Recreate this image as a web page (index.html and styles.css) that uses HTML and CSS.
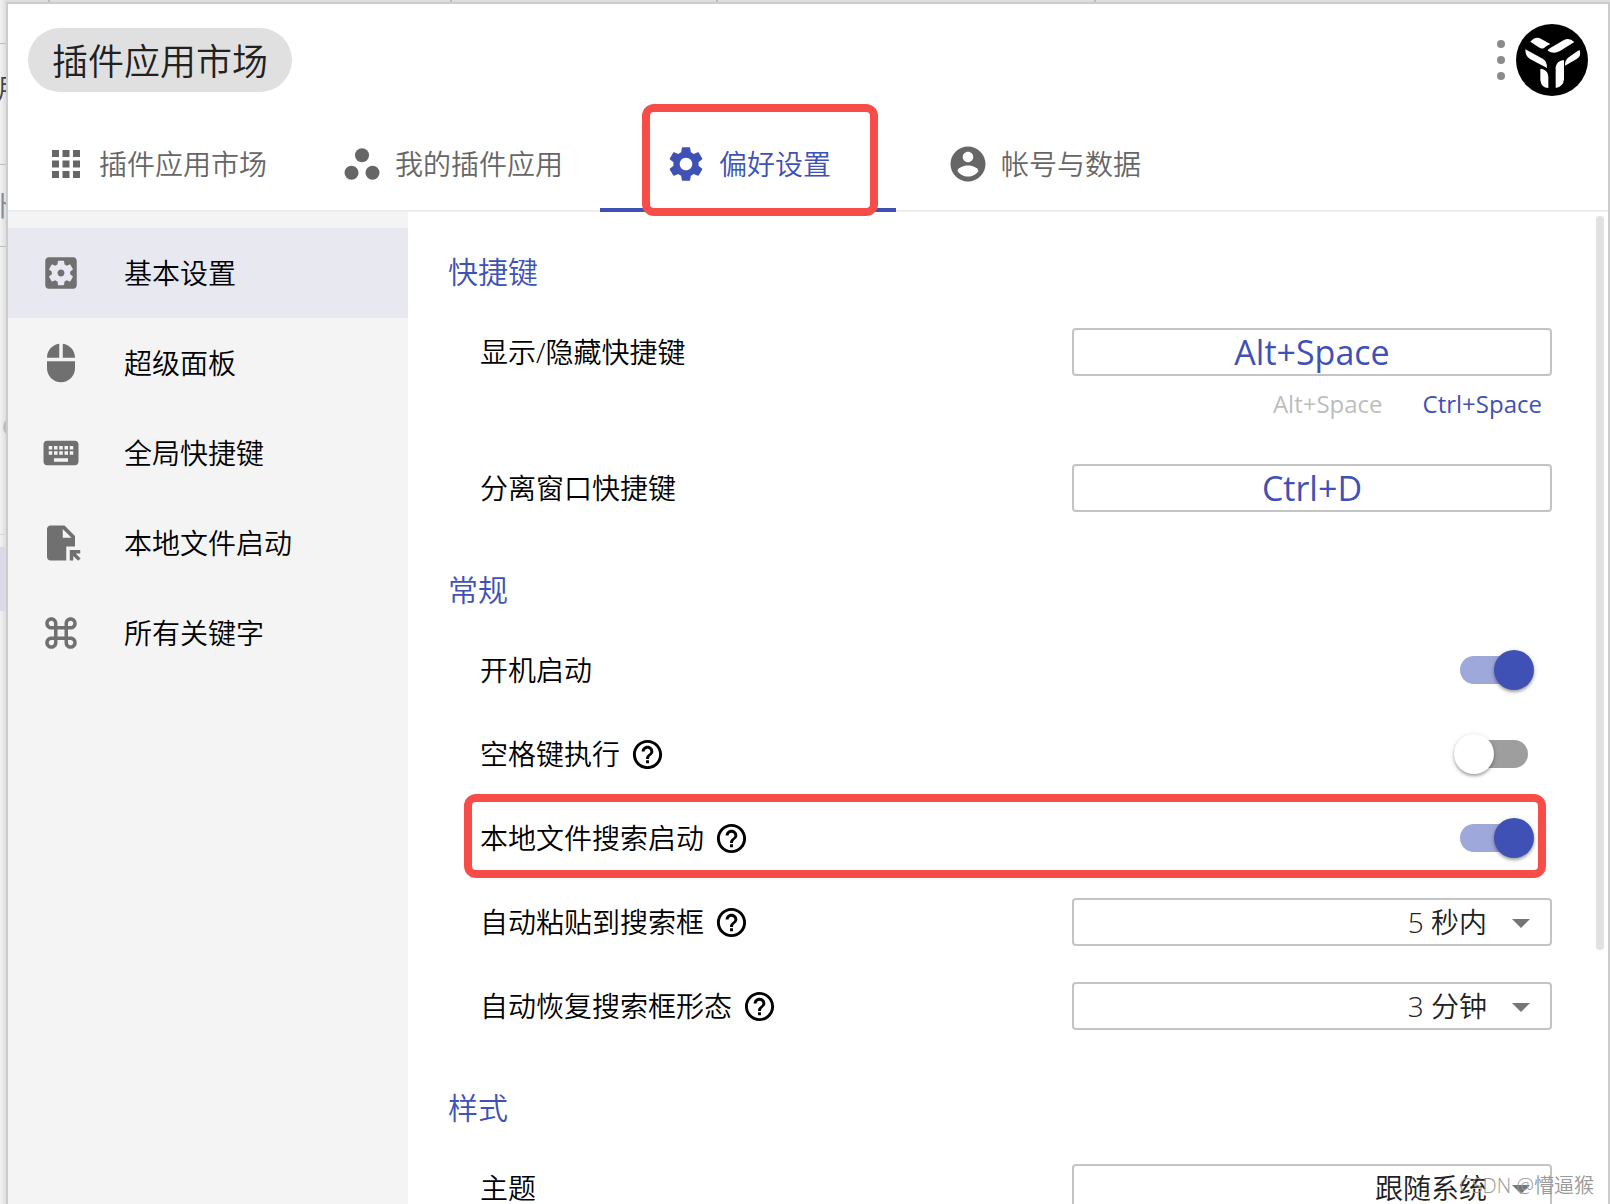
FILE: index.html
```html
<!DOCTYPE html>
<html lang="zh-CN">
<head>
<meta charset="utf-8">
<title>偏好设置</title>
<link rel="stylesheet" href="styles.css">
</head>
<body>
<svg class="defs" aria-hidden="true">
  <symbol id="help" viewBox="0 0 24 24"><path d="M11 18h2v-2h-2v2zm1-16C6.480 2 2 6.480 2 12s4.480 10 10 10 10-4.480 10-10S17.520 2 12 2zm0 18c-4.410 0-8-3.590-8-8s3.590-8 8-8 8 3.590 8 8-3.590 8-8 8zm0-14c-2.210 0-4 1.790-4 4h2c0-1.100.9-2 2-2s2 .9 2 2c0 2-3 1.750-3 5h2c0-2.250 3-2.500 3-5 0-2.210-1.790-4-4-4z"/></symbol>
  <symbol id="arrow" viewBox="0 0 18 9"><path d="M0 0h18l-9 9z"/></symbol>
</svg>

<div class="backdrop" aria-hidden="true">
  <i class="rule r1"></i><i class="rule r2"></i><i class="rule r3"></i><i class="rule r4"></i>
  <i class="tick t1"></i><i class="tick t2"></i><i class="tick t3"></i><i class="tick t4"></i>
  <span class="peek p1">用</span><span class="peek p2">卜</span>
  <i class="knob"></i><i class="shade"></i>
</div>

<div class="window">
  <header class="header">
    <button class="pill" type="button">插件应用市场</button>
    <div class="header-actions">
      <button class="more" type="button" aria-label="更多">
        <svg width="8" height="40" viewBox="0 0 8 40"><circle cx="4" cy="4" r="4"/><circle cx="4" cy="20" r="4"/><circle cx="4" cy="36" r="4"/></svg>
      </button>
      <svg class="avatar" viewBox="0 0 216 216" role="img" aria-label="uTools">
        <circle cx="108" cy="108" r="108"/>
        <g fill="#fff">
          <path d="M43 53Q55 39 70 42L103 60Q90 66 83 73Q76 75 68 70Z"/>
          <path d="M95 80Q96 76 104 71L144 48Q160 40 175 54L132 81Q112 92 95 80Z"/>
          <path d="M28 76L80 104Q94 112 93 132L42 105Q27 96 28 76Z"/>
          <path d="M73 136Q75 132 81 136Q96 142 97 158V192Q76 192 73 168Z"/>
          <path d="M119 192V130Q121 110 144 108V166Q142 188 119 192Z"/>
          <path d="M147 125Q146 110 156 101L186 80Q192 76 192 82Q195 98 182 105Z"/>
        </g>
      </svg>
    </div>
  </header>

  <nav class="tabs">
    <a class="tab" href="#market"><svg viewBox="0 0 24 24"><path d="M4 8h4V4H4v4zm6 12h4v-4h-4v4zm-6 0h4v-4H4v4zm0-6h4v-4H4v4zm6 0h4v-4h-4v4zm6-10v4h4V4h-4zm-6 4h4V4h-4v4zm6 6h4v-4h-4v4zm0 6h4v-4h-4v4z"/></svg>插件应用市场</a>
    <a class="tab" href="#mine"><svg viewBox="0 0 24 24"><circle cx="6" cy="17" r="4"/><circle cx="12" cy="7" r="4"/><circle cx="18" cy="17" r="4"/></svg>我的插件应用</a>
    <a class="tab active" href="#settings" aria-current="page"><svg viewBox="0 0 24 24"><path d="M19.140 12.940c.04-.3.060-.61.060-.94 0-.32-.02-.64-.07-.94l2.030-1.580c.18-.14.230-.41.120-.61l-1.920-3.320c-.12-.22-.37-.29-.59-.22l-2.390.96c-.5-.38-1.030-.7-1.620-.94l-.36-2.540c-.04-.24-.24-.41-.48-.41h-3.840c-.24 0-.43.170-.47.410l-.36 2.540c-.59.240-1.130.570-1.620.940l-2.390-.96c-.22-.08-.47 0-.59.220L2.740 8.870c-.12.210-.08.470.120.610l2.030 1.580c-.05.3-.09.630-.09.940s.02.640.070.940l-2.030 1.580c-.18.140-.23.410-.12.610l1.920 3.320c.12.220.37.290.59.220l2.390-.96c.5.380 1.030.7 1.620.940l.36 2.540c.05.240.24.410.48.410h3.840c.24 0 .44-.17.470-.41l.36-2.540c.59-.24 1.130-.56 1.620-.94l2.390.96c.22.080.47 0 .59-.22l1.920-3.320c.12-.22.070-.47-.12-.61l-2.010-1.580zM12 15.600c-1.980 0-3.600-1.620-3.600-3.600s1.620-3.600 3.600-3.600 3.600 1.620 3.600 3.600-1.620 3.600-3.600 3.600z"/></svg>偏好设置<span class="mark mark-tab"></span></a>
    <a class="tab" href="#account"><svg viewBox="0 0 24 24"><path d="M12 2C6.480 2 2 6.480 2 12s4.480 10 10 10 10-4.480 10-10S17.520 2 12 2zm0 3c1.660 0 3 1.340 3 3s-1.340 3-3 3-3-1.340-3-3 1.340-3 3-3zm0 14.200c-2.500 0-4.710-1.280-6-3.220.03-1.990 4-3.080 6-3.080 1.990 0 5.970 1.090 6 3.080-1.290 1.940-3.500 3.220-6 3.220z"/></svg>帐号与数据</a>
  </nav>

  <div class="body">
    <nav class="sidebar">
      <a class="side-item active" href="#basic" aria-current="page"><svg viewBox="0 0 24 24"><path d="M12 10c-1.100 0-2 .9-2 2s.9 2 2 2 2-.9 2-2-.9-2-2-2zm7-7H5c-1.110 0-2 .9-2 2v14c0 1.100.89 2 2 2h14c1.110 0 2-.9 2-2V5c0-1.100-.89-2-2-2zm-1.750 9c0 .23-.02.460-.05.680l1.480 1.160c.13.110.17.300.080.450l-1.400 2.420c-.09.150-.27.210-.43.150l-1.740-.7c-.36.280-.76.510-1.180.690l-.26 1.850c-.03.170-.18.300-.35.300h-2.800c-.17 0-.32-.13-.35-.29l-.26-1.850c-.43-.18-.82-.41-1.180-.69l-1.740.7c-.16.060-.34 0-.43-.15l-1.400-2.420c-.09-.15-.05-.34.080-.45l1.480-1.160c-.03-.23-.05-.46-.05-.69 0-.23.020-.46.050-.68l-1.480-1.160c-.13-.11-.17-.3-.08-.45l1.400-2.420c.09-.15.27-.21.430-.15l1.740.7c.36-.28.76-.51 1.180-.69l.26-1.850c.03-.17.180-.3.350-.3h2.800c.17 0 .32.130.35.290l.26 1.850c.43.180.82.410 1.180.690l1.740-.7c.16-.06.34 0 .43.150l1.400 2.420c.09.150.05.340-.08.450l-1.480 1.160c.03.230.05.460.05.690z"/></svg>基本设置</a>
      <a class="side-item" href="#panel"><svg viewBox="0 0 24 24"><path d="M13 1.070V9h7c0-4.080-3.050-7.440-7-7.930zM4 15c0 4.420 3.580 8 8 8s8-3.580 8-8v-4H4v4zm7-13.930C7.050 1.560 4 4.920 4 9h7V1.070z"/></svg>超级面板</a>
      <a class="side-item" href="#hotkeys"><svg viewBox="0 0 24 24"><path d="M20 5H4c-1.100 0-1.990.9-1.990 2L2 17c0 1.100.9 2 2 2h16c1.100 0 2-.9 2-2V7c0-1.100-.9-2-2-2zm-9 3h2v2h-2V8zm0 3h2v2h-2v-2zM8 8h2v2H8V8zm0 3h2v2H8v-2zm-1 2H5v-2h2v2zm0-3H5V8h2v2zm9 7H8v-2h8v2zm0-4h-2v-2h2v2zm0-3h-2V8h2v2zm3 3h-2v-2h2v2zm0-3h-2V8h2v2z"/></svg>全局快捷键</a>
      <a class="side-item" href="#files"><svg viewBox="0 0 24 24"><path d="M15 22H6c-1.100 0-2-.9-2-2V4c0-1.100.9-2 2-2h8l6 6v6h-5v8zM13 4v5h5l-5-5zM17 16h6v2h-2.600l2.800 2.800-1.400 1.400L19 19.400V22h-2z"/></svg>本地文件启动</a>
      <a class="side-item" href="#keywords"><svg viewBox="0 0 24 24"><path d="M17.500 3C15.570 3 14 4.570 14 6.500V8h-4V6.500C10 4.570 8.430 3 6.500 3S3 4.570 3 6.500 4.570 10 6.500 10H8v4H6.500C4.570 14 3 15.570 3 17.500S4.570 21 6.500 21s3.500-1.570 3.500-3.500V16h4v1.500c0 1.930 1.570 3.500 3.500 3.500s3.500-1.570 3.500-3.500-1.570-3.500-3.500-3.500H16v-4h1.500c1.930 0 3.500-1.570 3.500-3.500S19.430 3 17.500 3zM16 8V6.500c0-.83.670-1.500 1.500-1.500s1.500.67 1.500 1.500S18.330 8 17.500 8H16zM6.500 8C5.670 8 5 7.330 5 6.500S5.670 5 6.500 5 8 5.670 8 6.500V8H6.500zm3.500 6v-4h4v4h-4zm7.500 5c-.83 0-1.500-.67-1.500-1.500V16h1.500c.83 0 1.500.67 1.500 1.500s-.67 1.500-1.500 1.500zm-11 0c-.83 0-1.500-.67-1.500-1.500S5.670 16 6.500 16H8v1.500c0 .83-.67 1.500-1.500 1.500z"/></svg>所有关键字</a>
    </nav>

    <main class="content">
      <h2>快捷键</h2>
      <div class="row">
        <label for="toggle-key">显示/隐藏快捷键</label>
        <input class="field key" id="toggle-key" type="text" value="Alt+Space" readonly>
      </div>
      <div class="presets">
        <button type="button" disabled>Alt+Space</button>
        <button type="button">Ctrl+Space</button>
      </div>
      <div class="row">
        <label for="detach-key">分离窗口快捷键</label>
        <input class="field key" id="detach-key" type="text" value="Ctrl+D" readonly>
      </div>

      <h2>常规</h2>
      <div class="row">
        <label for="autostart">开机启动</label>
        <input class="switch" id="autostart" type="checkbox" checked>
      </div>
      <div class="row">
        <label for="space-run">空格键执行<svg><use href="#help"/></svg></label>
        <input class="switch" id="space-run" type="checkbox">
      </div>
      <div class="row">
        <label for="file-search">本地文件搜索启动<svg><use href="#help"/></svg></label>
        <input class="switch" id="file-search" type="checkbox" checked>
        <span class="mark mark-row"></span>
      </div>
      <div class="row">
        <label for="paste">自动粘贴到搜索框<svg><use href="#help"/></svg></label>
        <div class="select"><select class="field" id="paste"><option>5 秒内</option></select><svg><use href="#arrow"/></svg></div>
      </div>
      <div class="row">
        <label for="restore">自动恢复搜索框形态<svg><use href="#help"/></svg></label>
        <div class="select"><select class="field" id="restore"><option>3 分钟</option></select><svg><use href="#arrow"/></svg></div>
      </div>

      <h2>样式</h2>
      <div class="row">
        <label for="theme">主题</label>
        <div class="select"><select class="field" id="theme"><option>跟随系统</option></select><svg><use href="#arrow"/></svg></div>
      </div>
    </main>
    <div class="scrollbar" aria-hidden="true"></div>
  </div>
</div>
<div class="watermark">CSDN @懵逼猴</div>
</body>
</html>
```
FILE: styles.css
```css
:root {
  --primary: #3f51b5;
  --line: #c4c4c4;
  --mark: #f74c48;
}

* { box-sizing: border-box; }

body {
  margin: 0;
  height: 100vh;
  overflow: hidden;
  display: flex;
  position: relative;
  padding: 2px 0 0 6px;
  background: #efefef;
  color: #000;
  font: 350 28px/40px "Open Sans", "Noto Sans CJK SC", sans-serif;
}

button, input, select { font: inherit; color: inherit; }
a { color: inherit; text-decoration: none; }
button { border: 0; padding: 0; background: none; }
svg { display: block; flex: none; fill: currentColor; }
.defs { position: absolute; width: 0; height: 0; }

/* Slivers of the window behind */
.backdrop {
  position: absolute;
  inset: 0;
  overflow: hidden;
  background: linear-gradient(90deg, #f2f2f2, #dedede 6px);
}
.backdrop > * { position: absolute; }
.rule { left: 0; width: 6px; height: 1px; background: #bdbdbd; }
.r1 { top: 43px; }
.r2 { top: 164px; }
.r3 { top: 246px; }
.r4 { top: 534px; background: #d8d8d8; }
.tick { top: 0; width: 2px; height: 2px; background: #bdbdbd; }
.t1 { left: 48px; }
.t2 { left: 450px; }
.t3 { left: 716px; }
.t4 { left: 1094px; }
.peek { color: #444; font-size: 28px; line-height: 28px; }
.p1 { left: -3px; top: 74px; }
.p2 { left: -9px; top: 192px; color: #889; }
.knob { left: 3px; top: 417px; width: 20px; height: 20px; border-radius: 50%; background: #bdbdbd; }
.shade { left: 0; top: 547px; width: 6px; height: 64px; background: #d9dae6; }

.window {
  position: relative;
  flex: 1;
  min-width: 0;
  display: flex;
  flex-direction: column;
  border: 2px solid #ccc;
  border-bottom: 0;
  background: #fff;
}

.header {
  display: flex;
  align-items: center;
  justify-content: space-between;
  padding: 20px;
}
.pill {
  height: 64px;
  padding: 4px 24px 0;
  border-radius: 32px;
  background: #e0e0e0;
  color: #212121;
  font-size: 36px;
}
.header-actions { display: flex; align-items: center; gap: 11px; }
.more { color: #8a8a8a; }
.avatar { width: 72px; height: 72px; fill: #000; }

.tabs {
  display: flex;
  height: 96px;
  flex: none;
  border-bottom: 2px solid #e8eef2;
  color: #666;
}
.tab {
  position: relative;
  width: 296px;
  height: 96px;
  display: flex;
  align-items: center;
  justify-content: center;
  gap: 12px;
}
.tab svg { width: 42px; height: 42px; }
.tab.active { color: var(--primary); box-shadow: inset 0 -4px var(--primary); }

/* Red call-outs drawn over the controls */
.mark {
  position: absolute;
  border: 8px solid var(--mark);
  border-radius: 12px;
  pointer-events: none;
}
.mark-tab { inset: -12px 18px -4px 42px; z-index: 1; }
.mark-row { inset: -2px 6px 2px -16px; }

.body { flex: 1; min-height: 0; display: flex; }
.sidebar { width: 400px; flex: none; padding-top: 16px; background: #f4f4f4; }
.side-item {
  display: flex;
  align-items: center;
  gap: 42px;
  height: 90px;
  padding-left: 32px;
}
.side-item svg { width: 42px; height: 42px; color: #707070; }
.side-item.active { background: #e8e8f1; }

.content { flex: 1; min-width: 0; overflow: hidden; padding: 0 44px 0 40px; }
h2 {
  margin: 38px 0 16px;
  color: var(--primary);
  font-size: 30px;
  font-weight: inherit;
  line-height: 44px;
}
.row {
  position: relative;
  display: flex;
  align-items: center;
  justify-content: space-between;
  height: 84px;
  margin-left: 32px;
}
.row label { display: flex; align-items: center; gap: 10px; }
.row label svg { width: 35px; height: 35px; }

.field {
  display: block;
  width: 480px;
  height: 48px;
  border: 2px solid var(--line);
  border-radius: 4px;
  background: #fff;
  color: #212121;
}
.key {
  padding: 0;
  color: var(--primary);
  font-size: 34px;
  font-weight: 400;
  text-align: center;
}
.presets {
  display: flex;
  justify-content: flex-end;
  gap: 40px;
  margin-bottom: 32px;
  padding-right: 10px;
  color: var(--primary);
  font-size: 24px;
  font-weight: 400;
  line-height: 20px;
}
.presets button:disabled { color: #bdbdbd; }

.select { position: relative; }
.select select { appearance: none; padding: 0 63px 0 12px; line-height: 40px; text-align: right; text-align-last: right; }
.select svg {
  position: absolute;
  right: 22px;
  top: 21px;
  width: 18px;
  height: 9px;
  color: #757575;
  pointer-events: none;
}

.switch {
  appearance: none;
  position: relative;
  width: 68px;
  height: 28px;
  margin: 0 24px 0 0;
  border-radius: 14px;
  background: #9e9e9e;
}
.switch::before {
  content: "";
  position: absolute;
  left: -6px;
  top: -6px;
  width: 40px;
  height: 40px;
  border-radius: 50%;
  background: #fff;
  box-shadow: 0 2px 3px rgba(0, 0, 0, .3), 0 1px 6px rgba(0, 0, 0, .12);
}
.switch:checked { background: #9fa8da; }
.switch:checked::before { left: 34px; background: var(--primary); }

.scrollbar {
  width: 8px;
  height: 74%;
  margin: 4px 4px 0 0;
  border-radius: 4px;
  background: #e1e1e1;
}

.watermark {
  position: absolute;
  right: 16px;
  bottom: 4px;
  color: #999;
  font-size: 20px;
  line-height: 28px;
}
```
